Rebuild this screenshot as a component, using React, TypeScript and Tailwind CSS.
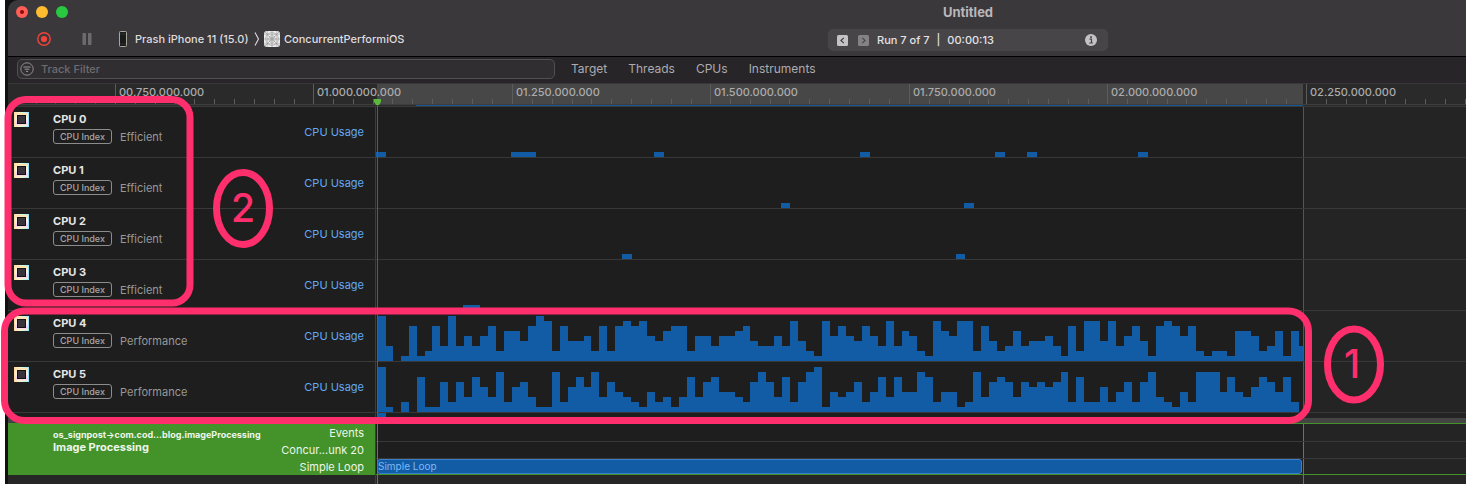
import React from "react";

const MAJOR = 198.45;
const STEP = 7.95;

const cpu4 =
  "93017127393535726647982744527" +
  "27878546772553556743353842185" +
  "75475383652186588274236344531" +
  "72884835741787572122166523616";
const cpu5 =
  "91020711626375382563118257583" +
  "64321423137367443268637268914" +
  "34624737448724412836763656568" +
  "27225246268321428884743576472";

type Bar = [x: number, width: number];
type Track = { name: string; kind: string; bars?: Bar[]; levels?: string };

const tracks: Track[] = [
  { name: "CPU 0", kind: "Efficient", bars: [[0, 10], [135, 25], [278, 10], [484, 10], [619, 10], [651, 10], [762, 10]] },
  { name: "CPU 1", kind: "Efficient", bars: [[405, 9], [588, 10]] },
  { name: "CPU 2", kind: "Efficient", bars: [[246, 10], [580, 9]] },
  { name: "CPU 3", kind: "Efficient", bars: [[87, 17]] },
  { name: "CPU 4", kind: "Performance", levels: cpu4 + "3" },
  { name: "CPU 5", kind: "Performance", levels: cpu5 },
];

const times = [
  "00.750.000.000",
  "01.000.000.000",
  "01.250.000.000",
  "01.500.000.000",
  "01.750.000.000",
  "02.000.000.000",
  "02.250.000.000",
];

const edge = (i: number) => Math.round(0.8 + i * STEP);

function UsageChart({ bars, levels }: { bars?: Bar[]; levels?: string }) {
  return (
    <svg className="block h-[50px] w-full" shapeRendering="crispEdges" fill="#125ca6" aria-hidden="true">
      {bars?.map(([x, w]) => <rect key={x} x={x} y="45" width={w} height="5" />)}
      {levels?.split("").map((l, i) => (
        <rect key={i} x={edge(i)} y={50 - Number(l) * 5} width={edge(i + 1) - edge(i) + (i === 0 ? 1 : 0)} height={Number(l) * 5} />
      ))}
    </svg>
  );
}

function CpuIcon() {
  return (
    <span className="mt-[5px] h-[15px] w-[15px] shrink-0 bg-[linear-gradient(90deg,#ffd3a0,#fff6c8_35%,#a8f0ff_85%,#8fe4ff)] p-px">
      <span className="block size-full bg-[linear-gradient(180deg,#ffe0a8_0%,#fdf3e4_45%,#f6c9ff_80%,#fff3c0_100%)] p-[2px]">
        <span className="block size-full border border-[#111] bg-[#38333a]" />
      </span>
    </span>
  );
}

function TrackRow({ track }: { track: Track }) {
  return (
    <div className="flex h-[51px] border-b border-[#383838]">
      <div className="flex w-[368px] shrink-0 border-r border-[#3c3c3c] bg-[#1e1e1e] pr-[11px] pl-[6px]">
        <CpuIcon />
        <div className="ml-6 pt-[5px]">
          <div className="text-[11px] leading-[14px] font-bold text-[#e6e6e6]">{track.name}</div>
          <div className="mt-[3px] flex gap-2">
            <span className="flex h-[15px] w-[59px] items-center justify-center rounded-[3px] border border-[#8c8c8c] text-[9px] font-medium whitespace-nowrap text-[#a8a8a8]">
              CPU Index
            </span>
            <span className="text-[11px] leading-[17px] text-[#989898]">{track.kind}</span>
          </div>
        </div>
        <div className="ml-auto self-center text-[11px] text-[#63a9f5]">CPU Usage</div>
      </div>
      <div className="w-[928px] shrink-0 overflow-hidden border-r border-[#555] bg-[#1e1e1e]">
        <UsageChart bars={track.bars} levels={track.levels} />
      </div>
      <div className="flex-1 bg-[#242424]" />
    </div>
  );
}

function Ruler() {
  return (
    <div className="relative h-[23px] overflow-hidden border-b border-[#3a3a3a] bg-[#2a2a2a]">
      <div className="absolute top-0 left-[369px] h-5 w-[926px] bg-[#474747]" />
      <div className="absolute top-[21px] left-[408px] h-px w-[887px] bg-[#175690]" />
      <div className="relative flex h-[21px] border-b border-[#3e3e3e]">
        <svg className="h-5 w-[107px] shrink-0" shapeRendering="crispEdges" stroke="#4c4c4c" aria-hidden="true">
          {[1, 2, 3, 4, 5].map((n) => (
            <line key={n} x1={107.5 - Math.round(n * 19.845)} x2={107.5 - Math.round(n * 19.845)} y1="15" y2="20" />
          ))}
        </svg>
        {times.map((t, i) => (
          <div
            key={t}
            className="relative shrink-0 border-l border-[#5c5c5c] pl-[3px] text-[11px] leading-4 font-medium whitespace-nowrap text-[#acacac]"
            style={{ width: Math.round((i + 1) * MAJOR) - Math.round(i * MAJOR) }}
          >
            {t}
            <svg className="absolute bottom-0 left-0 h-[5px] w-full" shapeRendering="crispEdges" stroke="#5c5c5c" aria-hidden="true">
              {[1, 2, 3, 4, 5, 6, 7, 8, 9].map((n) => (
                <line key={n} x1={Math.round(n * 19.845) - 0.5} x2={Math.round(n * 19.845) - 0.5} y1="0" y2="5" />
              ))}
            </svg>
          </div>
        ))}
      </div>
    </div>
  );
}

function Header() {
  return (
    <header className="flex h-[57px] overflow-hidden rounded-tl-[10px] border-b border-black bg-[#3b383c]">
      <div className="w-[820px] shrink-0">
        <div className="flex h-6 items-center gap-2 pl-2">
          <button aria-label="Close" className="flex size-3 items-center justify-center rounded-full bg-[#ff5f57]">
            <span className="size-1 rounded-full bg-[#8e0a05]" />
          </button>
          <button aria-label="Minimize" className="size-3 rounded-full bg-[#febc2e]" />
          <button aria-label="Zoom" className="size-3 rounded-full bg-[#28c840]" />
        </div>
        <div className="flex h-[30px] items-center pl-7 text-[11px] font-medium whitespace-nowrap text-[#dedcdf]">
          <button aria-label="Record">
            <svg width="16" height="16" viewBox="0 0 16 16" fill="none">
              <circle cx="8" cy="8" r="6.2" stroke="#f0443a" strokeWidth="1.4" />
              <circle cx="8" cy="8" r="3.1" fill="#f0443a" />
            </svg>
          </button>
          <button aria-label="Pause" className="ml-[30px]">
            <svg width="10" height="12" viewBox="0 0 10 12" fill="#6d6a6e">
              <rect x="0.5" y="0" width="3.5" height="12" rx="0.8" />
              <rect x="6" y="0" width="3.5" height="12" rx="0.8" />
            </svg>
          </button>
          <svg className="ml-[27px]" width="8" height="16" viewBox="0 0 8 16" aria-hidden="true">
            <rect x="0.5" y="0.5" width="7" height="15" rx="0.8" fill="#1a1c1c" stroke="#a9a69c" />
            <path d="M1 3h6M1 13h6" stroke="#3b403f" strokeWidth="0.6" />
          </svg>
          <span className="ml-2 w-[118px]">Prash iPhone 11 (15.0)</span>
          <svg width="8" height="16" viewBox="0 0 8 16" fill="none" stroke="#dedcdf" strokeWidth="1.1" aria-hidden="true">
            <path d="M2 1.5 5.5 8 2 14.5" />
          </svg>
          <svg className="ml-[3px]" width="16" height="16" viewBox="0 0 16 16" aria-hidden="true">
            <rect width="16" height="16" rx="3" fill="#ededed" />
            <g fill="none" stroke="#8b8b8b" strokeWidth="0.5">
              <path d="M0 3.2h16M0 8h16M0 12.8h16M3.2 0v16M8 0v16M12.8 0v16M1 1l14 14M15 1 1 15" />
              <circle cx="8" cy="8" r="6.4" />
              <circle cx="8" cy="8" r="3.4" />
              <circle cx="8" cy="8" r="1.6" />
            </g>
          </svg>
          <span className="ml-1">ConcurrentPerformiOS</span>
        </div>
      </div>
      <div className="w-[280px] shrink-0">
        <h1 className="text-center text-[13px] leading-6 font-bold text-[#b9b7ba]">Untitled</h1>
        <div className="mt-[5px] flex h-[22px] items-center rounded-[5px] bg-[#484549] pr-[11px] pl-[9px] text-[11px] font-medium whitespace-nowrap text-[#e4e2e5]">
          <button aria-label="Previous run">
            <svg width="11" height="11" viewBox="0 0 11 11" fill="none">
              <rect width="11" height="11" rx="1.5" fill="#c4c2c5" />
              <path d="M6.8 2.8 3.9 5.5l2.9 2.7" stroke="#3b383c" strokeWidth="1.1" />
            </svg>
          </button>
          <button aria-label="Next run" className="ml-[10px]">
            <svg width="11" height="11" viewBox="0 0 11 11" fill="none">
              <rect width="11" height="11" rx="1.5" fill="#858286" />
              <path d="M4.2 2.8l2.9 2.7-2.9 2.7" stroke="#484549" strokeWidth="1.1" />
            </svg>
          </button>
          <span className="ml-2 flex gap-[7px]">
            <span>Run 7 of 7</span>
            <span>|</span>
            <span>00:00:13</span>
          </span>
          <button aria-label="Run info" className="ml-auto">
            <svg width="12" height="12" viewBox="0 0 12 12">
              <circle cx="6" cy="6" r="6" fill="#c4c2c5" />
              <circle cx="6" cy="3.1" r="1" fill="#484549" />
              <path d="M4.5 5.1h2v3.6M4.2 9h3.7" fill="none" stroke="#484549" strokeWidth="1.2" />
            </svg>
          </button>
        </div>
      </div>
    </header>
  );
}

function FilterBar() {
  return (
    <div className="flex h-[27px] items-center border-b border-[#3a383b] bg-[#272528] pb-[2px] pl-[9px]">
      <label className="flex h-5 w-[538px] items-center gap-[7px] rounded-[5px] border border-[#535054] bg-[#312e32] pl-[2px] text-[11px]">
        <svg width="14" height="14" viewBox="0 0 14 14" fill="none" stroke="#99969a" aria-hidden="true">
          <circle cx="7" cy="7" r="6.2" strokeWidth="0.9" />
          <path d="M3.4 5h7.2M4.6 7.2h4.8M5.9 9.4h2.2" strokeWidth="1" />
        </svg>
        <input
          aria-label="Track Filter"
          placeholder="Track Filter"
          className="min-w-0 flex-1 bg-transparent font-medium outline-none placeholder:text-[#6e6b70]"
        />
      </label>
      <nav className="ml-4 flex gap-[21px] text-[12px] text-[#adabae]">
        {["Target", "Threads", "CPUs", "Instruments"].map((n) => (
          <button key={n}>{n}</button>
        ))}
      </nav>
    </div>
  );
}

function SignpostTrack() {
  return (
    <div className="flex h-[52px] border-t border-[#43922a]">
      <div className="-mt-px flex w-[368px] shrink-0 justify-between border-r border-[#3c3c3c] bg-[#43922a] pr-[11px] pl-[45px] whitespace-nowrap">
        <div className="pt-[6px] font-bold text-[#eef6eb]">
          <div className="text-[9px] leading-3">os_signpost→com.cod...blog.imageProcessing</div>
          <div className="text-[11px] leading-3">Image Processing</div>
        </div>
        <div className="pt-[2px] text-right text-[11px] leading-[17px] text-[#eef6eb]">
          <div>Events</div>
          <div>Concur...unk 20</div>
          <div>Simple Loop</div>
        </div>
      </div>
      <div className="flex min-w-0 flex-1 flex-col border-b border-[#43922a]">
        {["Events", "Concurrent", "Loop"].map((lane) => (
          <div
            key={lane}
            className={
              lane === "Loop"
                ? "flex flex-1"
                : lane === "Events"
                  ? "flex h-[18px] shrink-0 border-b border-[#383838]"
                  : "flex h-[17px] shrink-0 border-b border-[#383838]"
            }
          >
            <div className="w-[928px] shrink-0 border-r border-[#43922a] bg-[#1e1e1e] pl-px">
              {lane === "Loop" && (
                <div className="h-[15px] w-[925px] rounded-[3px] border border-[#3b7fc9] bg-[#125ca6] text-[10px] leading-[13px] text-[#7fb9f5]">
                  Simple Loop
                </div>
              )}
            </div>
            <div className="flex-1 bg-[#242424]" />
          </div>
        ))}
      </div>
    </div>
  );
}

function Callouts() {
  return (
    <svg className="pointer-events-none absolute inset-0 h-[484px] w-full" fill="none" stroke="#ff2f6d" strokeWidth="7">
      <rect x="8" y="99.5" width="182" height="203.5" rx="18" />
      <rect x="4.5" y="311" width="1304" height="109.5" rx="20" />
      <ellipse cx="243" cy="208.5" rx="26.5" ry="36" />
      <ellipse cx="1354" cy="364.5" rx="26.5" ry="35.5" />
      <g fill="#ff2f6d" stroke="none" fontSize="39" fontWeight="500" fontFamily="Inter, sans-serif" textAnchor="middle">
        <text x="243" y="222">2</text>
        <text x="1352" y="378">1</text>
      </g>
    </svg>
  );
}

export default function App() {
  return (
    <div className="relative flex min-h-screen overflow-hidden bg-white pl-[5px] font-['Inter',sans-serif]">
      <main className="min-w-0 flex-1 bg-[#111] pl-[3px]">
        <Header />
        <FilterBar />
        <div className="relative bg-[#262626]">
          <Ruler />
          {tracks.map((t) => (
            <TrackRow key={t.name} track={t} />
          ))}
          <div className="flex h-[5px]">
            <div className="w-[368px] shrink-0 border-r border-[#3c3c3c] bg-[#1e1e1e]" />
            <div className="w-[928px] shrink-0 border-r border-[#555] bg-[#1e1e1e] pl-[2px]">
              <div className="h-full w-2 bg-[#125ca6]" />
            </div>
            <div className="flex-1 bg-[#242424]" />
          </div>
          <div className="h-[5px] bg-[#444]" />
          <SignpostTrack />
          <div className="flex h-[9px]">
            <div className="w-[368px] shrink-0 border-r border-[#3c3c3c]" />
            <div className="w-[928px] shrink-0 border-r border-[#43922a]" />
          </div>
          <div className="absolute top-5 bottom-[61px] left-[369px] w-px bg-[#5a5a5a]" />
          <div className="absolute bottom-0 left-[369px] h-[61px] w-px bg-[#43922a]" />
          <svg className="absolute top-[15px] left-[366px]" width="7" height="6" viewBox="0 0 7 6" fill="#5cb83c" aria-hidden="true">
            <path d="M0 0h7v3L5 6H2L0 3z" />
          </svg>
        </div>
      </main>
      <Callouts />
    </div>
  );
}
